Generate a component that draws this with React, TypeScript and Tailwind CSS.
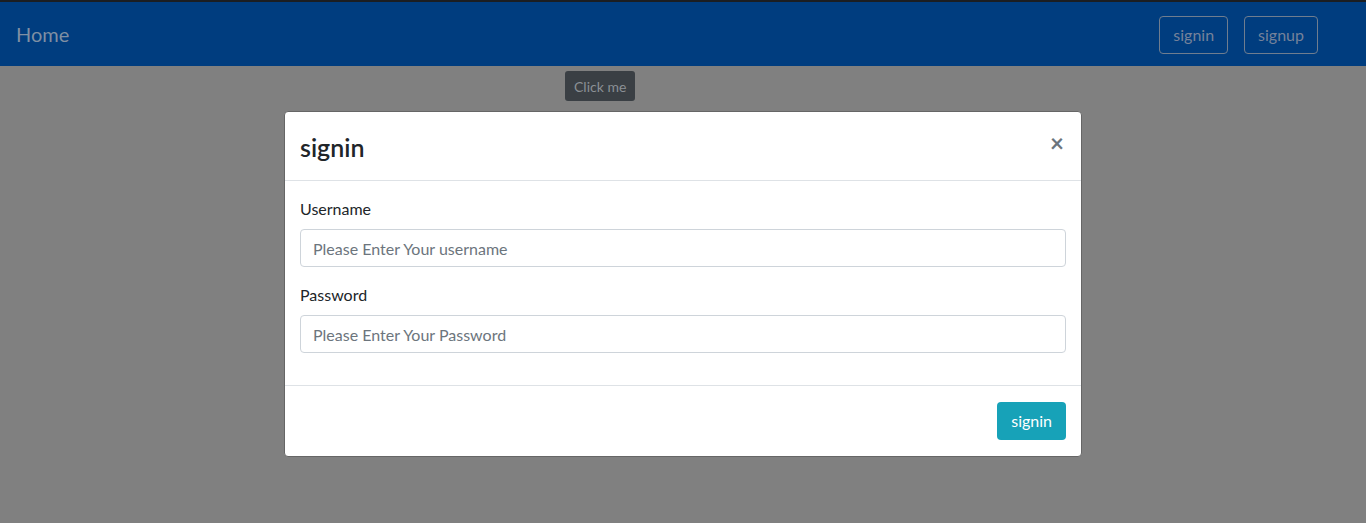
import React from "react";

export default function App() {
  const font = { fontFamily: '"Segoe UI", Lato, "Noto Sans", sans-serif' };
  return (
    <div className="relative w-[1366px] h-[523px] overflow-hidden bg-[#808080]" style={font}>
      {/* page (dimmed by backdrop) */}
      <div className="flex flex-col">
        <div className="h-[2px] bg-[#1b1e22]" />
        <nav className="h-[64px] bg-[#003d7f] flex items-center justify-between pl-4 pr-[48px]">
          <span className="text-[20px] leading-[30px] text-[#7f8fa3]">Home</span>
          <div className="flex gap-4 pt-[2px]">
            <button className="h-[38px] px-[13px] rounded-[4px] border border-[#6f7d8f] text-[16px] text-[#75829a]">signin</button>
            <button className="h-[38px] px-[13px] rounded-[4px] border border-[#6f7d8f] text-[16px] text-[#75829a]">signup</button>
          </div>
        </nav>
        <div className="flex pl-[565px] pt-[5px]">
          <button className="h-[30px] px-[9px] rounded-[3px] bg-[#3a3f44] text-[14px] text-[#8b9095]">Click me</button>
        </div>
      </div>

      {/* modal */}
      <div className="absolute inset-0 flex justify-center pt-[111px]">
        <div className="w-[798px] h-[346px] bg-white rounded-[4px] border border-[#666] flex flex-col">
          <div className="flex items-start justify-between px-[15px] pt-[17px] pb-[15px] border-b border-[#dee2e6]">
            <h4 className="text-[25px] leading-[36px] font-semibold text-[#212529]">signin</h4>
            <span className="text-[24px] leading-[24px] font-bold text-[#6c757d] mt-[2px] mr-[2px]">×</span>
          </div>
          <div className="flex flex-col px-[15px] pt-[16px] pb-[16px] text-[16px]">
            <div className="flex flex-col mb-4">
              <label className="leading-[24px] mb-2 text-[#212529]">Username</label>
              <input
                className="h-[38px] w-full px-[12px] rounded-[4px] border border-[#ced4da] text-[16px] placeholder-[#6c757d] outline-none"
                placeholder="Please Enter Your username"
              />
            </div>
            <div className="flex flex-col mb-4">
              <label className="leading-[24px] mb-2 text-[#212529]">Password</label>
              <input
                className="h-[38px] w-full px-[12px] rounded-[4px] border border-[#ced4da] text-[16px] placeholder-[#6c757d] outline-none"
                placeholder="Please Enter Your Password"
              />
            </div>
          </div>
          <div className="flex justify-end px-[15px] py-[16px] border-t border-[#dee2e6]">
            <button className="h-[38px] px-[14px] rounded-[4px] bg-[#17a2b8] text-white text-[16px]">signin</button>
          </div>
        </div>
      </div>
    </div>
  );
}
